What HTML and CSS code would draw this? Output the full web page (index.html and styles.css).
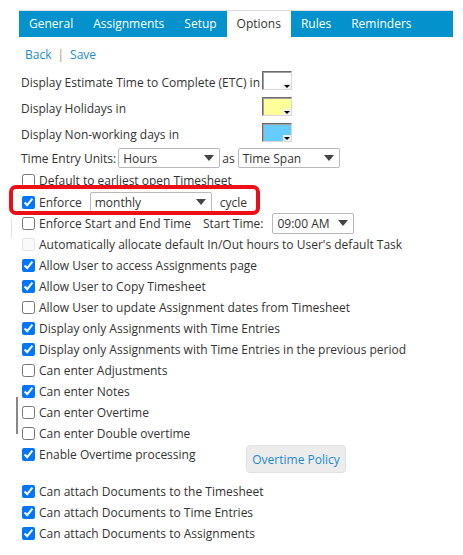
FILE: index.html
```html
<!DOCTYPE html>
<html>
<head>
<meta charset="utf-8">
<link rel="stylesheet" href="styles.css">
</head>
<body>
<div class="page">
  <div class="tabs">
    <div class="tab">General</div>
    <div class="tab">Assignments</div>
    <div class="tab">Setup</div>
    <div class="tab active">Options</div>
    <div class="tab">Rules</div>
    <div class="tab">Reminders</div>
  </div>
  <div class="content">
    <div class="links"><a class="link">Back</a><span class="sep">|</span><a class="link">Save</a></div>

    <div class="row swrow"><span class="swlabel">Display Estimate Time to Complete (ETC) in</span><span class="swatch sw-white"><span class="swarrow"></span></span></div>
    <div class="row swrow"><span class="swlabel">Display Holidays in</span><span class="swatch sw-yellow"><span class="swarrow"></span></span></div>
    <div class="row swrow"><span class="swlabel">Display Non-working days in</span><span class="swatch sw-blue"><span class="swarrow"></span></span></div>

    <div class="row units">
      <span>Time Entry Units:</span>
      <span class="select sel-hours"><span>Hours</span><svg class="caret" width="10" height="6" viewBox="0 0 10 6"><path d="M0 0h10L5 6z"/></svg></span>
      <span class="as">as</span>
      <span class="select sel-span"><span>Time Span</span><svg class="caret" width="10" height="6" viewBox="0 0 10 6"><path d="M0 0h10L5 6z"/></svg></span>
    </div>

    <label class="row cb r-default"><input type="checkbox"><span>Default to earliest open Timesheet</span></label>

    <div class="row cb r-enforce">
      <input type="checkbox" checked><span>Enforce</span>
      <span class="select sel-monthly"><span>monthly</span><svg class="caret" width="10" height="6" viewBox="0 0 10 6"><path d="M0 0h10L5 6z"/></svg></span>
      <span class="cycle">cycle</span>
      <div class="highlight"></div>
    </div>

    <div class="row cb r-start">
      <input type="checkbox"><span class="startlabel">Enforce Start and End Time</span>
      <span class="starttime">Start Time:</span>
      <span class="select sel-time"><span>09:00 AM</span><svg class="caret" width="10" height="6" viewBox="0 0 10 6"><path d="M0 0h10L5 6z"/></svg></span>
    </div>

    <label class="row cb r-auto"><input type="checkbox" disabled><span>Automatically allocate default In/Out hours to User's default Task</span></label>

    <label class="row cb"><input type="checkbox" checked><span>Allow User to access Assignments page</span></label>
    <label class="row cb"><input type="checkbox" checked><span>Allow User to Copy Timesheet</span></label>
    <label class="row cb"><input type="checkbox"><span>Allow User to update Assignment dates from Timesheet</span></label>
    <label class="row cb"><input type="checkbox" checked><span>Display only Assignments with Time Entries</span></label>
    <label class="row cb"><input type="checkbox" checked><span>Display only Assignments with Time Entries in the previous period</span></label>
    <label class="row cb"><input type="checkbox"><span>Can enter Adjustments</span></label>
    <label class="row cb"><input type="checkbox" checked><span>Can enter Notes</span></label>
    <label class="row cb r-ot"><input type="checkbox"><span>Can enter Overtime</span></label>
    <label class="row cb"><input type="checkbox"><span>Can enter Double overtime</span></label>

    <div class="otrow">
      <label class="row cb otlabel"><input type="checkbox" checked><span>Enable Overtime processing</span></label>
      <button class="otbtn">Overtime Policy</button>
    </div>

    <label class="row cb"><input type="checkbox" checked><span>Can attach Documents to the Timesheet</span></label>
    <label class="row cb"><input type="checkbox" checked><span>Can attach Documents to Time Entries</span></label>
    <label class="row cb"><input type="checkbox" checked><span>Can attach Documents to Assignments</span></label>
  </div>
</div>
</body>
</html>
```
FILE: styles.css
```css
html, body {
  margin: 0;
  padding: 0;
  background: #fff;
}
body {
  font-family: "Open Sans", "Noto Sans", sans-serif;
  font-size: 12px;
  color: #333;
}
.page {
  padding-top: 10px;
}
.tabs {
  margin-left: 19px;
  width: 434px;
  border-top: 1px solid #dcdcdc;
  background: #0392cb;
  display: flex;
  height: 26px;
}
.tab {
  padding: 0 10px;
  color: #fff;
  line-height: 25px;
}
.tab.active {
  background: #fff;
  color: #333;
}
.content {
  padding-left: 21px;
}
.links {
  margin-top: 7px;
  height: 20px;
  display: flex;
  align-items: center;
  padding-left: 4px;
  margin-bottom: 5px;
}
.link {
  color: #1a8bd0;
}
.sep {
  color: #c58a5c;
  margin: 0 6px;
}
.row {
  display: flex;
  align-items: center;
  height: 21px;
  white-space: nowrap;
}
.swrow {
  height: 26px;
}
.swlabel {
  width: 241px;
}
.swatch {
  position: relative;
  box-sizing: border-box;
  width: 30px;
  height: 19px;
  border: 1px solid;
  border-color: #6b6b6b #d8d8d8 #d8d8d8 #6b6b6b;
  box-shadow: inset 1px 1px 0 #a0a0a0;
  margin-top: -4px;
}
.sw-white { background: #fff; }
.sw-yellow { background: #ffff99; }
.sw-blue { background: #66ccff; }
.swarrow {
  position: absolute;
  right: 0;
  bottom: 0;
  width: 8px;
  height: 6px;
  background: #f0f0f0;
}
.swarrow::after {
  content: "";
  position: absolute;
  left: 1px;
  top: 2px;
  border-left: 3px solid transparent;
  border-right: 3px solid transparent;
  border-top: 3px solid #000;
}
.units {
  height: 22px;
}
.select {
  box-sizing: border-box;
  display: inline-flex;
  align-items: center;
  justify-content: space-between;
  height: 20px;
  border: 1px solid #b9b9b9;
  border-radius: 2px;
  padding: 0 5px 0 4px;
  background: #fff;
  color: #333;
}
.caret {
  fill: #444;
}
.sel-hours {
  width: 102px;
  margin-left: 2px;
}
.as {
  margin: 0 3px 0 2px;
}
.sel-span {
  width: 102px;
}
.cb input {
  margin: 0 4px 0 1px;
  width: 13px;
  height: 13px;
  flex: none;
}
.r-default {
  height: 23px;
}
.r-enforce {
  height: 20px;
  position: relative;
}
.sel-monthly {
  width: 122px;
  height: 21px;
  margin-left: 8px;
}
.cycle {
  margin-left: 8px;
}
.highlight {
  position: absolute;
  left: -12px;
  top: -7px;
  width: 251px;
  height: 30px;
  box-sizing: border-box;
  border: 4px solid #ec1016;
  border-radius: 7px;
  pointer-events: none;
}
.r-start {
  height: 22px;
  position: relative;
}
.r-start::before {
  content: "";
  position: absolute;
  left: -10px;
  top: 6px;
  width: 1px;
  height: 20px;
  background: #e2e2e2;
}
.startlabel {
  width: 164px;
}
.sel-time {
  width: 82px;
  height: 21px;
  margin-left: 9px;
}
.r-auto input {
  opacity: 0.6;
}
.r-ot {
  position: relative;
}
.r-ot::before {
  content: "";
  position: absolute;
  left: -5px;
  top: -5px;
  width: 2px;
  height: 37px;
  background: #878787;
}
.otrow {
  display: flex;
  align-items: flex-start;
  height: 37px;
}
.otlabel {
  width: 225px;
}
.otbtn {
  margin-top: 1px;
  height: 28px;
  width: 100px;
  padding: 0;
  border: 1px solid #e2e2e2;
  border-radius: 4px;
  background: #ececec;
  color: #1a8bd0;
  font-family: "Open Sans", "Noto Sans", sans-serif;
  font-size: 12px;
}
```
